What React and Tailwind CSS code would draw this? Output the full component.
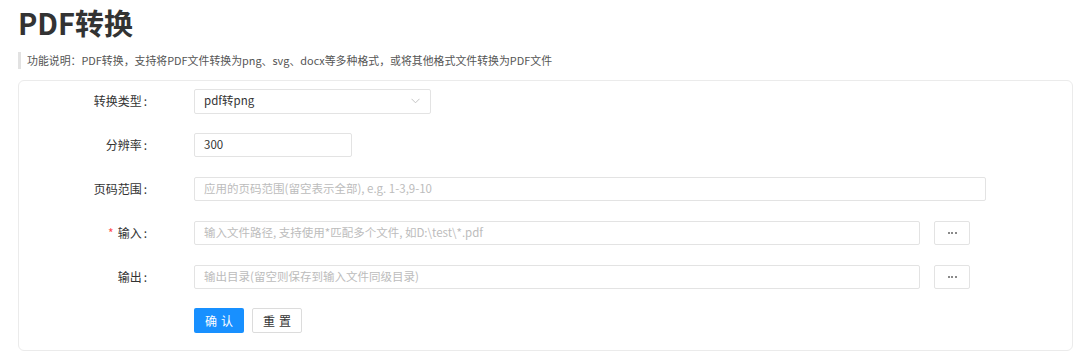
import React from "react";

const font = { fontFamily: '"Noto Sans CJK SC", "Noto Sans", sans-serif' };

// 表单一行：左侧标签 + 右侧控件
const FormRow = ({ label, required, children }) => (
  <div className="flex items-center h-[24px]">
    <div className="w-[130px] flex justify-end items-center text-[12px] text-[#333] pr-[2px]">
      {required && <span className="text-[#ff4d4f] mr-[4px] text-[12px]">*</span>}
      <span>{label}</span>
      <span className="ml-[2px]">:</span>
    </div>
    <div className="ml-[45px] flex items-center">{children}</div>
  </div>
);

const Input = ({ width, value, placeholder }) => (
  <div
    className={`${width} h-[24px] border border-[#e3e3e3] rounded-[2px] px-[9px] flex items-center text-[11.5px] ${
      value ? "text-[#333]" : "text-[#bcbcbc]"
    }`}
  >
    {value || placeholder}
  </div>
);

const DotsButton = () => (
  <div className="ml-[14px] w-[36px] h-[24px] border border-[#e3e3e3] rounded-[2px] flex items-center justify-center gap-[1.5px]">
    <span className="w-[2px] h-[2px] bg-[#8a8a8a]" />
    <span className="w-[2px] h-[2px] bg-[#8a8a8a]" />
    <span className="w-[2px] h-[2px] bg-[#8a8a8a]" />
  </div>
);

export default function App() {
  return (
    <div className="bg-white w-[1080px] h-[355px] overflow-hidden" style={font}>
      <h1 className="ml-[18px] pt-[2px] text-[29px] font-semibold text-[#333] leading-[40px]">
        PDF转换
      </h1>
      <div className="ml-[18px] mt-[10px] h-[17px] border-l-[3px] border-[#e2e2e2] pl-[6px] flex items-center text-[10.9px] text-[#555]">
        功能说明：PDF转换，支持将PDF文件转换为png、svg、docx等多种格式，或将其他格式文件转换为PDF文件
      </div>
      <div className="ml-[18px] mt-[11px] w-[1055px] h-[271px] border border-[#ebebeb] rounded-[6px] pt-[8px] flex flex-col gap-[20px]">
        <FormRow label="转换类型">
          <div className="w-[237px] h-[25px] border border-[#e3e3e3] rounded-[2px] pl-[9px] pr-[10px] flex items-center justify-between text-[11.5px] text-[#333]">
            <span>pdf转png</span>
            <svg width="9" height="6" viewBox="0 0 9 6" fill="none">
              <path d="M0.5 0.8 L4.5 4.8 L8.5 0.8" stroke="#c4c4c4" strokeWidth="1" />
            </svg>
          </div>
        </FormRow>
        <FormRow label="分辨率">
          <Input width="w-[158px]" value="300" />
        </FormRow>
        <FormRow label="页码范围">
          <Input width="w-[792px]" placeholder="应用的页码范围(留空表示全部), e.g. 1-3,9-10" />
        </FormRow>
        <FormRow label="输入" required>
          <Input width="w-[726px]" placeholder="输入文件路径, 支持使用*匹配多个文件, 如D:\test\*.pdf" />
          <DotsButton />
        </FormRow>
        <FormRow label="输出">
          <Input width="w-[726px]" placeholder="输出目录(留空则保存到输入文件同级目录)" />
          <DotsButton />
        </FormRow>
        <div className="flex ml-[175px] -mt-[1px]">
          <button className="w-[50px] h-[25px] bg-[#1890ff] text-white rounded-[2px] text-[12px] tracking-[4px] pl-[4px]">
            确认
          </button>
          <button className="ml-[8px] w-[50px] h-[25px] border border-[#dcdcdc] text-[#333] rounded-[2px] text-[12px] tracking-[4px] pl-[4px]">
            重置
          </button>
        </div>
      </div>
    </div>
  );
}
